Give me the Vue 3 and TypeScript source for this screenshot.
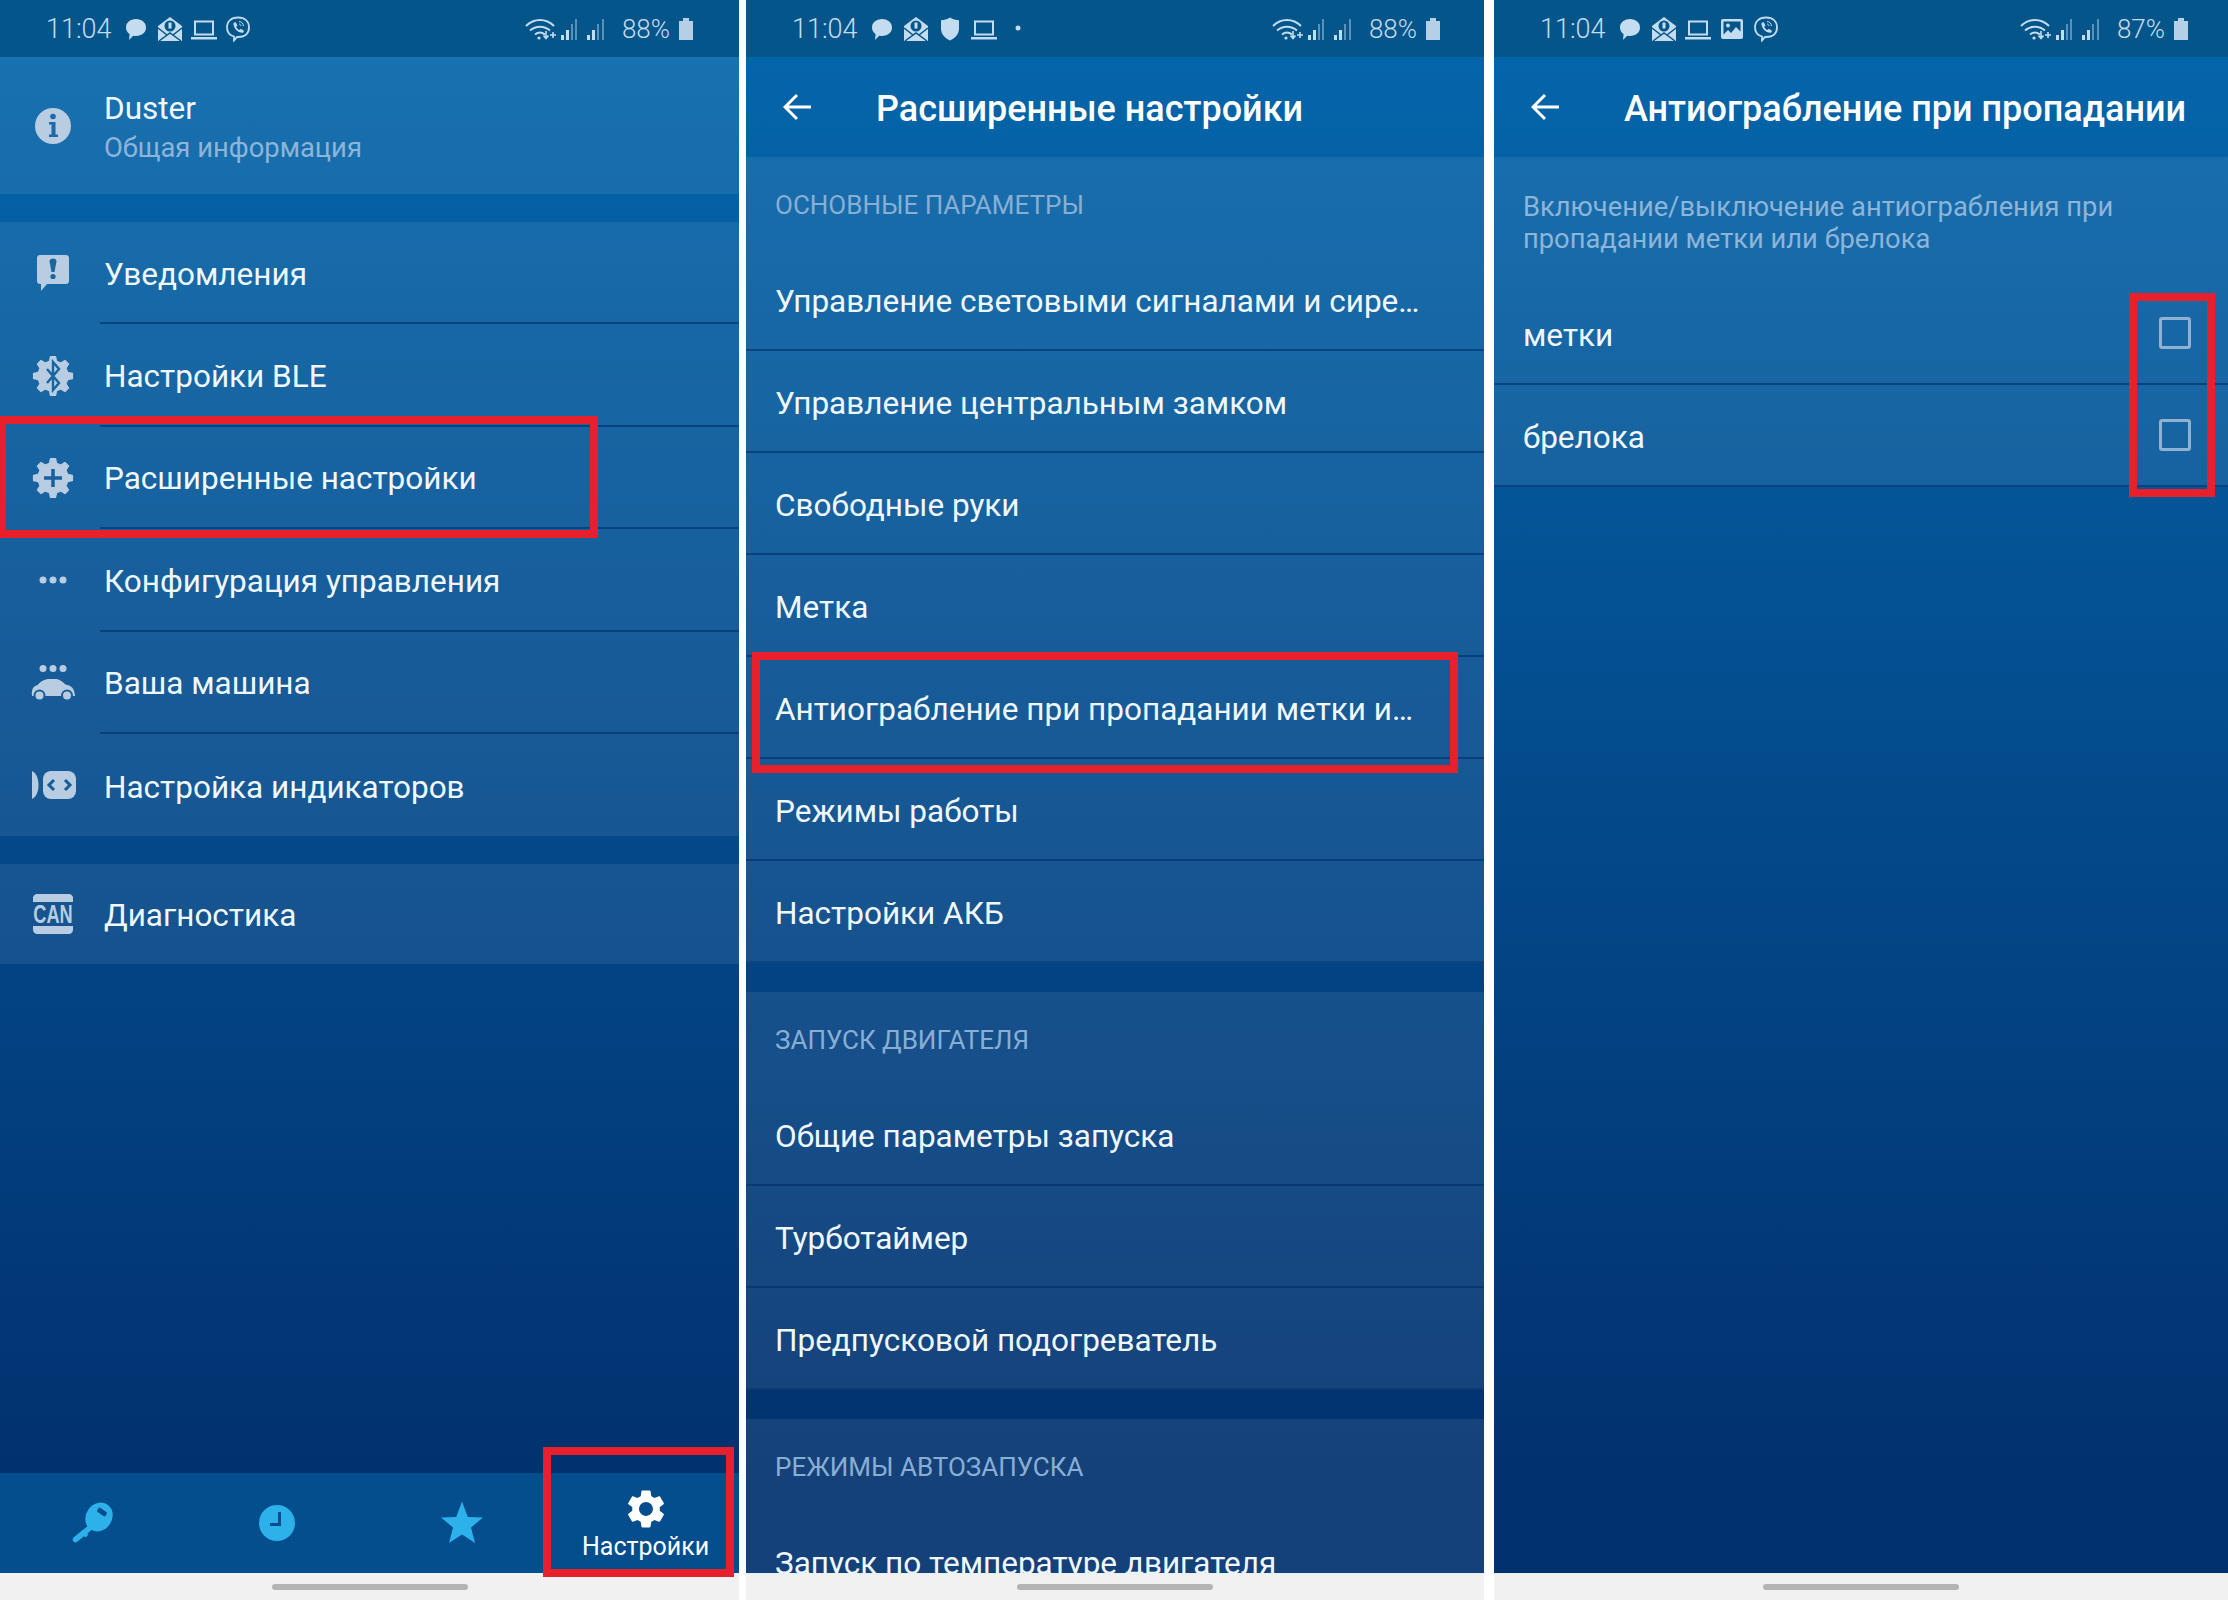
<template>
  <div class="page">
    <svg class="defs" aria-hidden="true">
      <symbol id="s-bubble" viewBox="0 0 26 26">
        <path d="M13 3c6 0 10 3.600 10 8.500S19 20 13 20c-1 0-2-.1-2.800-.3L6 24l.6-5.800C4.300 16.600 3 14.200 3 11.500 3 6.600 7 3 13 3z" fill="currentColor" />
      </symbol>
      <symbol id="s-mail" viewBox="0 0 26 26">
        <path d="M13 1 25 10v15H1V10z" fill="currentColor" />
        <circle cx="13" cy="10" r="5.500" fill="#04558a" />
        <rect x="11.500" y="6.500" width="3" height="6" fill="currentColor" />
        <path d="M1 12l9 7M25 12l-9 7M2 25l11-8 11 8" fill="none" stroke="#04558a" stroke-width="1.500" />
      </symbol>
      <symbol id="s-laptop" viewBox="0 0 26 26">
        <path d="M4 5.500h18v13H4z" fill="none" stroke="currentColor" stroke-width="2" />
        <rect x="0" y="21" width="26" height="2.500" fill="currentColor" />
      </symbol>
      <symbol id="s-viber" viewBox="0 0 26 26">
        <path d="M13 1.500c6.500 0 11 3.500 11 10s-4.500 9.500-11 9.500h-1l-3 3.500V20.500C4 19 2 15.700 2 11.500 2 5 6.500 1.500 13 1.500z" fill="none" stroke="currentColor" stroke-width="1.800" />
        <path d="M8.500 7l2-1 2 3.500-1.300 1.300c.7 1.500 1.700 2.600 3.300 3.300l1.300-1.300 3.200 2-1 2c-4.800.5-10-4.800-9.500-9.800z" fill="currentColor" />
        <path d="M14 5.500c2.500.2 4.300 2 4.500 4.500M14 8c1.200.2 2 1 2.100 2.100" fill="none" stroke="currentColor" stroke-width="1" />
      </symbol>
      <symbol id="s-shield" viewBox="0 0 26 26">
        <path d="M13 1.500c3 1.800 6 2.500 9 2.700v8.300c0 5.600-4 9.700-9 12-5-2.300-9-6.400-9-12V4.200c3-.2 6-.9 9-2.700z" fill="currentColor" />
      </symbol>
      <symbol id="s-dot" viewBox="0 0 26 26">
        <circle cx="13" cy="12" r="2.500" fill="currentColor" />
      </symbol>
      <symbol id="s-image" viewBox="0 0 26 26">
        <rect x="2" y="3" width="22" height="20" rx="2" fill="currentColor" />
        <path d="M4.500 5.500h17v10l-4.500-4.500-5 6-3-3-4.500 4.500z" fill="#04558a" />
        <circle cx="9" cy="9.500" r="2" fill="currentColor" />
      </symbol>
      <symbol id="s-net" viewBox="0 0 81 22">
        <path d="M1 8c8-8 20-8 28 0M5 12.500c6-5 14-5 20 0M10 16.500c3-2.500 7-2.500 10 0" fill="none" stroke="currentColor" stroke-width="2" />
        <circle cx="14" cy="20" r="1.600" fill="currentColor" />
        <path d="M21 13v7M18.500 17.500l2.500 3 2.500-3M25 17h6M28 14v6" fill="none" stroke="currentColor" stroke-width="1.600" />
        <rect x="36" y="17" width="3" height="5" fill="currentColor" />
        <rect x="41" y="12" width="3" height="10" fill="currentColor" />
        <rect x="46" y="6" width="2" height="16" fill="currentColor" opacity=".45" />
        <rect x="50" y="1" width="2" height="21" fill="currentColor" opacity=".45" />
        <rect x="62" y="17" width="3" height="5" fill="currentColor" />
        <rect x="67" y="12" width="3" height="10" fill="currentColor" />
        <rect x="72" y="6" width="2" height="16" fill="currentColor" opacity=".45" />
        <rect x="77" y="1" width="2" height="21" fill="currentColor" opacity=".45" />
      </symbol>
      <symbol id="s-battery" viewBox="0 0 14 22">
        <path d="M4 0h6v3h4v19H0V3h4z" fill="currentColor" />
      </symbol>

      <symbol id="i-info" viewBox="0 0 48 48">
        <circle cx="24" cy="24" r="18" fill="currentColor" />
        <circle cx="24" cy="14.500" r="2.800" fill="#1b69a9" />
        <path d="M20 20h6.500v12.500H29V35h-9v-2.500h2.500V22.500H20z" fill="#1b69a9" />
      </symbol>
      <symbol id="i-alert" viewBox="0 0 48 48">
        <path d="M11 6h26c1.700 0 3 1.300 3 3v23c0 1.700-1.300 3-3 3H18l-6 7v-7h-1c-1.700 0-3-1.300-3-3V9c0-1.700 1.300-3 3-3z" fill="currentColor" />
        <path d="M20.500 12.500c0-1.800 1.500-3 3.500-3s3.500 1.200 3.500 3L25.500 23h-3z" fill="#19669f" />
        <circle cx="24" cy="27.500" r="2.600" fill="#19669f" />
      </symbol>
      <symbol id="i-ble" viewBox="0 0 48 48">
        <path :d="gear" fill="currentColor" stroke="currentColor" stroke-width="1.500" stroke-linejoin="round" />
        <path d="M18 17l12 14-6 7V10l6 7-12 14" fill="none" stroke="#19649f" stroke-width="2.400" />
      </symbol>
      <symbol id="i-plus" viewBox="0 0 48 48">
        <path :d="gear" fill="currentColor" stroke="currentColor" stroke-width="1.500" stroke-linejoin="round" />
        <path d="M15 24h18M24 15v18" fill="none" stroke="#18609c" stroke-width="3.500" />
      </symbol>
      <symbol id="i-dots" viewBox="0 0 48 48">
        <circle cx="14" cy="24" r="3.500" fill="currentColor" />
        <circle cx="24" cy="24" r="3.500" fill="currentColor" />
        <circle cx="34" cy="24" r="3.500" fill="currentColor" />
      </symbol>
      <symbol id="i-car" viewBox="0 0 48 48">
        <circle cx="14" cy="9.500" r="3.500" fill="currentColor" />
        <circle cx="24" cy="9.500" r="3.500" fill="currentColor" />
        <circle cx="34" cy="9.500" r="3.500" fill="currentColor" />
        <path d="M3 37c-.5-6 .5-9.500 5.500-11 3.500-3.500 6.500-6 12.500-6h5c4.500 0 7.500 2.500 10.500 5.500 5.500.8 9 3.500 9.500 11.500z" fill="currentColor" />
        <circle cx="10.500" cy="36.500" r="5" fill="currentColor" stroke="#175e9b" stroke-width="2" />
        <circle cx="38" cy="36.500" r="5" fill="currentColor" stroke="#175e9b" stroke-width="2" />
      </symbol>
      <symbol id="i-led" viewBox="0 0 48 48">
        <path d="M3 10c4.500 2 6.500 8 6.500 14S7.500 36 3 38z" fill="currentColor" />
        <rect x="14" y="10" width="33" height="28" rx="8" fill="currentColor" />
        <path d="M25 19l-5 5 5 5M36 19l5 5-5 5" fill="none" stroke="#175c98" stroke-width="3" />
      </symbol>

      <symbol id="n-key" viewBox="0 0 48 48">
        <ellipse cx="31" cy="18" rx="15" ry="13" transform="rotate(-55 31 18)" fill="currentColor" />
        <path d="M24 27 7.500 40.500" fill="none" stroke="currentColor" stroke-width="5.500" stroke-linecap="round" />
        <path d="M15 33l4 4" fill="none" stroke="currentColor" stroke-width="4" />
        <rect x="29" y="10.500" width="10" height="5" rx="1.500" transform="rotate(35 34 13)" fill="#054e8d" />
      </symbol>
      <symbol id="n-clock" viewBox="0 0 48 48">
        <circle cx="24" cy="24" r="18" fill="currentColor" />
        <path d="M25 13h3v14h-11v-3h8z" fill="#054e8d" />
      </symbol>
      <symbol id="n-star" viewBox="0 0 48 48">
        <path d="M24 2.500 29.800 18 45 18.500 33 28.500 37 44 24 35.500 11 44 15 28.500 3 18.500 18.200 18z" fill="currentColor" />
      </symbol>
      <symbol id="n-gear" viewBox="0 0 24 24">
        <path d="M19.140 12.940c.04-.3.06-.61.06-.94 0-.32-.02-.64-.07-.94l2.030-1.580c.18-.14.23-.41.12-.61l-1.920-3.320c-.12-.22-.37-.29-.59-.22l-2.390.96c-.5-.38-1.030-.7-1.620-.94l-.36-2.540c-.04-.24-.24-.41-.48-.41h-3.840c-.24 0-.43.17-.47.41l-.36 2.540c-.59.24-1.130.57-1.620.94l-2.390-.96c-.22-.08-.47 0-.59.22L2.740 8.870c-.12.21-.08.47.12.61l2.030 1.580c-.05.3-.09.63-.09.94s.02.64.07.94l-2.030 1.580c-.18.14-.23.41-.12.61l1.920 3.320c.12.22.37.29.59.22l2.390-.96c.5.38 1.030.7 1.620.94l.36 2.540c.05.24.24.41.48.41h3.840c.24 0 .44-.17.47-.41l.36-2.540c.59-.24 1.130-.56 1.620-.94l2.390.96c.22.08.47 0 .59-.22l1.920-3.320c.12-.22.07-.47-.12-.61l-2.010-1.580zM12 15.600c-1.980 0-3.600-1.620-3.600-3.600s1.620-3.600 3.600-3.600 3.600 1.620 3.600 3.600-1.620 3.600-3.600 3.600z" fill="currentColor" />
      </symbol>
    </svg>

    <!-- first screen: settings menu -->
    <section class="screen screen-one">
      <header class="status">
        <span class="clock">11:04</span>
        <svg v-for="(n, i) in statusIcons[0]" :key="i" class="status-icon"><use :href="'#s-' + n" /></svg>
        <div class="status-right">
          <svg class="net"><use href="#s-net" /></svg>
          <span class="pct">88%</span>
          <svg class="battery"><use href="#s-battery" /></svg>
        </div>
      </header>

      <div class="card info-card">
        <svg class="row-icon"><use href="#i-info" /></svg>
        <div>
          <div class="label">Duster</div>
          <div class="sub">Общая информация</div>
        </div>
      </div>

      <div class="card menu">
        <div v-for="m in menu" :key="m.text" class="menu-row">
          <svg class="row-icon"><use :href="'#i-' + m.icon" /></svg>
          <div class="menu-label label">{{ m.text }}</div>
        </div>
      </div>

      <div class="card menu-single">
        <svg class="row-icon" viewBox="0 0 48 48">
          <path d="M8 4h32c2 0 4 2 4 3.500V12H4V7.500C4 6 6 4 8 4z" fill="currentColor" />
          <path d="M4 36h40v4c0 2-2 4-4 4H8c-2 0-4-2-4-4z" fill="currentColor" />
          <text class="can-text" transform="translate(24 33) scale(.7 1)" text-anchor="middle" fill="currentColor">CAN</text>
        </svg>
        <div class="label">Диагностика</div>
      </div>

      <nav class="tabs">
        <div class="tab"><svg class="tab-icon"><use href="#n-key" /></svg></div>
        <div class="tab"><svg class="tab-icon"><use href="#n-clock" /></svg></div>
        <div class="tab"><svg class="tab-icon"><use href="#n-star" /></svg></div>
        <div class="tab tab-active">
          <svg class="tab-gear"><use href="#n-gear" /></svg>
          <span>Настройки</span>
        </div>
      </nav>
      <div class="navbar"><i></i></div>

      <div class="mark mark-advanced"></div>
      <div class="mark mark-tab"></div>
    </section>

    <!-- second screen: advanced settings list -->
    <section class="screen screen-two">
      <header class="status">
        <span class="clock">11:04</span>
        <svg v-for="(n, i) in statusIcons[1]" :key="i" class="status-icon"><use :href="'#s-' + n" /></svg>
        <div class="status-right">
          <svg class="net"><use href="#s-net" /></svg>
          <span class="pct">88%</span>
          <svg class="battery"><use href="#s-battery" /></svg>
        </div>
      </header>

      <div class="appbar">
        <svg class="back" viewBox="0 0 28 28" width="28" height="28"><path d="M28 14H3M14 2 2 14l12 12" fill="none" stroke="#fff" stroke-width="3" /></svg>
        <h1>Расширенные настройки</h1>
      </div>

      <div class="scroll">
        <div v-for="g in groups" :key="g.title" class="card group">
          <div class="group-title">{{ g.title }}</div>
          <div v-for="r in g.rows" :key="r" class="row label">{{ r }}</div>
        </div>
      </div>
      <div class="navbar"><i></i></div>

      <div class="mark mark-antitheft"></div>
    </section>

    <!-- third screen: anti-robbery options -->
    <section class="screen screen-three">
      <header class="status">
        <span class="clock">11:04</span>
        <svg v-for="(n, i) in statusIcons[2]" :key="i" class="status-icon"><use :href="'#s-' + n" /></svg>
        <div class="status-right">
          <svg class="net"><use href="#s-net" /></svg>
          <span class="pct">87%</span>
          <svg class="battery"><use href="#s-battery" /></svg>
        </div>
      </header>

      <div class="appbar">
        <svg class="back" viewBox="0 0 28 28" width="28" height="28"><path d="M28 14H3M14 2 2 14l12 12" fill="none" stroke="#fff" stroke-width="3" /></svg>
        <h1>Антиограбление при пропадании</h1>
      </div>

      <div class="card options">
        <p class="hint">Включение/выключение антиограбления при<br />пропадании метки или брелока</p>
        <label v-for="o in options" :key="o" class="option label">
          <span>{{ o }}</span>
          <i class="check"></i>
        </label>
      </div>
      <div class="spacer"></div>
      <div class="navbar"><i></i></div>

      <div class="mark mark-checks"></div>
    </section>
  </div>
</template>

<script setup lang="ts">
function gearPath(cx: number, cy: number, outer: number, inner: number, teeth: number): string {
  const pts: string[] = []
  const step = (Math.PI * 2) / teeth
  for (let i = 0; i < teeth; i++) {
    const a = i * step - Math.PI / 2
    const corners: [number, number][] = [
      [inner, a - step * 0.3],
      [outer, a - step * 0.16],
      [outer, a + step * 0.16],
      [inner, a + step * 0.3],
    ]
    for (const [r, t] of corners) {
      pts.push(`${(cx + r * Math.cos(t)).toFixed(2)} ${(cy + r * Math.sin(t)).toFixed(2)}`)
    }
  }
  return 'M' + pts.join('L') + 'Z'
}

const gear = gearPath(24, 24, 19.5, 15, 8)

const statusIcons: string[][] = [
  ['bubble', 'mail', 'laptop', 'viber'],
  ['bubble', 'mail', 'shield', 'laptop', 'dot'],
  ['bubble', 'mail', 'laptop', 'image', 'viber'],
]

const menu = [
  { icon: 'alert', text: 'Уведомления' },
  { icon: 'ble', text: 'Настройки BLE' },
  { icon: 'plus', text: 'Расширенные настройки' },
  { icon: 'dots', text: 'Конфигурация управления' },
  { icon: 'car', text: 'Ваша машина' },
  { icon: 'led', text: 'Настройка индикаторов' },
]

const groups = [
  {
    title: 'ОСНОВНЫЕ ПАРАМЕТРЫ',
    rows: [
      'Управление световыми сигналами и сире…',
      'Управление центральным замком',
      'Свободные руки',
      'Метка',
      'Антиограбление при пропадании метки и…',
      'Режимы работы',
      'Настройки АКБ',
    ],
  },
  {
    title: 'ЗАПУСК ДВИГАТЕЛЯ',
    rows: ['Общие параметры запуска', 'Турботаймер', 'Предпусковой подогреватель'],
  },
  {
    title: 'РЕЖИМЫ АВТОЗАПУСКА',
    rows: ['Запуск по температуре двигателя'],
  },
]

const options = ['метки', 'брелока']
</script>

<style>
html,
body {
  margin: 0;
  background: #fff;
}
</style>

<style scoped>
.page {
  display: flex;
  width: 2228px;
  height: 1600px;
  overflow: hidden;
  background: #fff;
  font-family: Roboto, "Noto Sans", sans-serif;
}
.defs {
  position: absolute;
  width: 0;
  height: 0;
}
.can-text {
  font-family: "Liberation Sans", sans-serif;
  font-size: 26px;
  font-weight: 700;
}

.screen {
  position: relative;
  display: flex;
  flex-direction: column;
  height: 1600px;
  overflow: hidden;
  background: linear-gradient(#0565aa 57px, #02316f 1473px);
}
.screen-one { width: 739px; margin-right: 7px; }
.screen-two { width: 738px; margin-right: 10px; }
.screen-three { width: 734px; }

.status {
  display: flex;
  align-items: center;
  flex: none;
  height: 57px;
  padding: 0 46px 0 46px;
  background: #04558a;
  color: #c3dcf0;
}
.screen-two .status { padding-right: 44px; }
.screen-three .status { padding-right: 40px; }
.clock {
  width: 65px;
  margin-right: 12px;
  font-size: 27px;
  font-weight: 300;
  white-space: nowrap;
}
.status-icon {
  width: 26px;
  height: 26px;
  margin-right: 8px;
}
.status-right {
  display: flex;
  align-items: center;
  margin-left: auto;
}
.net {
  width: 81px;
  height: 22px;
  margin-right: 16px;
}
.pct {
  margin-right: 9px;
  font-size: 26px;
  font-weight: 300;
}
.battery {
  width: 14px;
  height: 22px;
  color: #b5d0e6;
}

.card {
  flex: none;
  background: rgba(255, 255, 255, 0.08);
}
.label {
  color: #f1f8fd;
  font-size: 31.5px;
}
.sub {
  margin-top: 5px;
  color: #8db5d8;
  font-size: 27.4px;
}
.row-icon {
  flex: none;
  width: 48px;
  height: 48px;
  margin: 0 27px 0 29px;
  color: #b8cde1;
}

.info-card {
  display: flex;
  align-items: center;
  height: 137px;
}
.info-card > div { padding-top: 3px; }
.menu {
  margin-top: 28px;
}
.menu-row {
  display: flex;
  align-items: center;
  height: 102.4px;
}
.menu-label {
  display: flex;
  align-items: center;
  flex: 1;
  height: 100%;
  box-sizing: border-box;
  margin-left: -4px;
  padding: 4px 0 0 4px;
  border-bottom: 2px solid rgba(0, 45, 105, 0.6);
}
.menu-row:last-child .menu-label { border-bottom: none; }
.menu-single {
  display: flex;
  align-items: center;
  height: 100px;
  margin-top: 28px;
}
.menu-single .label { padding-top: 3px; }

.tabs {
  display: grid;
  grid-template-columns: repeat(4, 1fr);
  flex: none;
  height: 100px;
  margin-top: auto;
  background: #054e8d;
}
.tab {
  display: flex;
  flex-direction: column;
  align-items: center;
  justify-content: center;
}
.tab-icon {
  width: 48px;
  height: 48px;
  color: #2cb1ea;
}
.tab-gear {
  width: 46px;
  height: 46px;
  color: #fff;
}
.tab-active {
  justify-content: flex-start;
  padding: 13px 2px 0 0;
  color: #fff;
  font-size: 25px;
  line-height: 30px;
}

.navbar {
  flex: none;
  height: 27px;
  box-sizing: border-box;
  padding-top: 10px;
  border-top: 1px solid #e4f2fa;
  background: #f1f1f1;
}
.navbar i {
  display: block;
  width: 196px;
  height: 6px;
  margin: 0 auto;
  border-radius: 3px;
  background: #b4b4b4;
}

.appbar {
  display: flex;
  align-items: center;
  flex: none;
  height: 100px;
}
.back {
  margin: 0 65px 0 37px;
}
.appbar h1 {
  margin: 0;
  padding-top: 4px;
  color: #fff;
  font-size: 36px;
  font-weight: 500;
  white-space: nowrap;
}

.scroll {
  flex: 1;
  min-height: 0;
  overflow: hidden;
}
.group { margin-bottom: 29px; }
.group-title {
  display: flex;
  align-items: center;
  height: 92px;
  box-sizing: border-box;
  padding: 4px 0 0 29px;
  color: #88afd3;
  font-size: 26px;
}
.row {
  display: flex;
  align-items: center;
  height: 102px;
  box-sizing: border-box;
  padding: 5px 0 0 29px;
  border-bottom: 2px solid rgba(0, 45, 105, 0.6);
  white-space: nowrap;
}
.group .row:last-child { border-bottom: 2px solid rgba(0, 35, 95, 0.3); }

.hint {
  height: 126px;
  box-sizing: border-box;
  margin: 0;
  padding: 34px 29px 0;
  color: #8db5d8;
  font-size: 27.3px;
  line-height: 32px;
}
.option {
  display: flex;
  align-items: center;
  justify-content: space-between;
  height: 102px;
  box-sizing: border-box;
  padding: 0 37px 0 29px;
  border-bottom: 2px solid rgba(0, 45, 105, 0.6);
}
.option span { padding-top: 5px; }
.check {
  width: 32px;
  height: 32px;
  box-sizing: border-box;
  border: 3px solid #8fb1d2;
  border-radius: 3px;
}
.spacer { flex: 1; }

/* red annotation frames drawn over the screenshots */
.mark {
  position: absolute;
  box-sizing: border-box;
  border: 8px solid #e8202c;
}
.mark-advanced { left: -2px; top: 416px; width: 600px; height: 122px; }
.mark-tab { left: 543px; top: 1447px; width: 191px; height: 130px; }
.mark-antitheft { left: 6px; top: 652px; width: 706px; height: 121px; }
.mark-checks { left: 635px; top: 293px; width: 86px; height: 204px; }
</style>
